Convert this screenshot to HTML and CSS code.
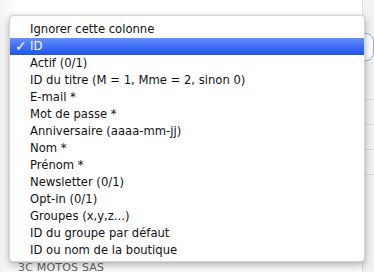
FILE: index.html
```html
<!DOCTYPE html>
<html>
<head>
<meta charset="utf-8">
<link rel="stylesheet" href="styles.css">
</head>
<body>
<div class="page">
  <div class="side">
    <div class="select"></div>
    <div class="line"></div>
    <div class="line"></div>
    <div class="line"></div>
    <div class="line"></div>
  </div>
  <div class="row-bottom">3C MOTOS SAS</div>
  <ul class="menu">
    <li class="item">Ignorer cette colonne</li>
    <li class="item selected"><span class="check">✓</span>ID</li>
    <li class="item">Actif (0/1)</li>
    <li class="item">ID du titre (M = 1, Mme = 2, sinon 0)</li>
    <li class="item">E-mail *</li>
    <li class="item">Mot de passe *</li>
    <li class="item">Anniversaire (aaaa-mm-jj)</li>
    <li class="item">Nom *</li>
    <li class="item">Prénom *</li>
    <li class="item">Newsletter (0/1)</li>
    <li class="item">Opt-in (0/1)</li>
    <li class="item">Groupes (x,y,z...)</li>
    <li class="item">ID du groupe par défaut</li>
    <li class="item">ID ou nom de la boutique</li>
  </ul>
</div>
</body>
</html>
```
FILE: styles.css
```css
html, body {
  margin: 0;
  padding: 0;
  background: #ffffff;
  width: 374px;
  height: 272px;
  overflow: hidden;
}
.page {
  position: relative;
  width: 374px;
  height: 272px;
  background: linear-gradient(to right, #f3f3f3 0, #fbfbfb 9px, #ffffff 20px);
  font-family: "DejaVu Sans", sans-serif;
}
.side {
  position: absolute;
  left: 362px;
  top: 0;
  width: 12px;
  height: 272px;
  background: #f2f2f2;
  border-left: 1px solid #dcdcdc;
  display: flex;
  flex-direction: column;
  padding-top: 33px;
  box-sizing: border-box;
}
.select {
  height: 26px;
  border: 1px solid #8fb0e0;
  border-radius: 8px;
  background: #fff;
  margin-left: -6px;
  margin-bottom: 14px;
}
.line {
  height: 24px;
  border-bottom: 1px solid #dedede;
}
.row-bottom {
  position: absolute;
  left: 18px;
  top: 262px;
  font-size: 11px;
  line-height: 12px;
  color: #666;
  letter-spacing: 0.2px;
}
.menu {
  position: absolute;
  left: 9px;
  top: 15px;
  width: 356px;
  height: 247px;
  margin: 0;
  padding: 5px 0 4px;
  box-sizing: border-box;
  list-style: none;
  background: #ffffff;
  border: 1px solid #d6d6d6;
  border-radius: 4px;
  box-shadow: 0 4px 8px rgba(0,0,0,0.28), 0 0 2px rgba(0,0,0,0.15);
}
.item {
  position: relative;
  height: 17px;
  line-height: 17px;
  padding-left: 20px;
  font-size: 11.6px;
  color: #111;
  white-space: nowrap;
}
.item.selected {
  background: linear-gradient(to bottom, #6a90f8 0%, #3f6ff5 50%, #1d55ee 100%);
  color: #fff;
}
.check {
  position: absolute;
  left: 5px;
  top: 0;
  font-size: 14px;
  font-weight: bold;
}
```
